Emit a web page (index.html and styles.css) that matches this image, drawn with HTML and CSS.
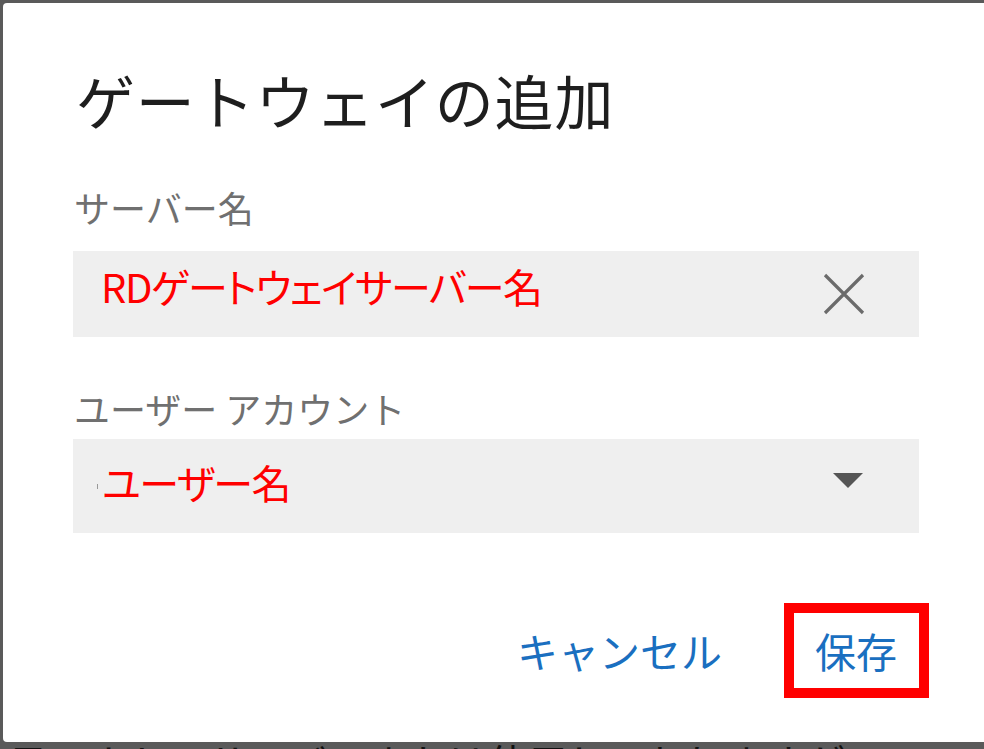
FILE: index.html
```html
<!DOCTYPE html>
<html lang="ja">
<head>
  <meta charset="UTF-8">
  <title>ゲートウェイの追加</title>
  <link rel="stylesheet" href="styles.css">
</head>
<body>
  <div class="dialog">
    <h1 class="title">ゲートウェイの追加</h1>

    <label class="field-label">サーバー名</label>
    <div class="field">
      <span class="field-text">RDゲートウェイサーバー名</span>
      <svg class="clear-icon" width="42" height="42" viewBox="0 0 42 42">
        <path d="M2 2 L40 40 M40 2 L2 40" stroke="#6b6b6b" stroke-width="3.2" fill="none"/>
      </svg>
    </div>

    <label class="field-label second">ユーザー アカウント</label>
    <div class="field select">
      <span class="caret-mark"></span>
      <span class="field-text">ユーザー名</span>
      <svg class="drop-icon" width="30" height="16" viewBox="0 0 30 16">
        <path d="M0 0 L30 0 L15 15 Z" fill="#555"/>
      </svg>
    </div>

    <div class="actions">
      <button class="btn">キャンセル</button>
      <button class="btn save">保存</button>
    </div>
  </div>
  <p class="behind">日　ホセンサーバーまたは使用しておりますが</p>
</body>
</html>
```

FILE: styles.css
```css
body {
  margin: 0;
  background-color: #5a5a5a;
  font-family: "Noto Sans CJK JP", "Noto Sans", sans-serif;
  overflow: hidden;
  height: 749px;
}

.dialog {
  margin: 3px 0 0 3px;
  width: 846px;
  height: 677px;
  padding: 62px 65px 0 70px;
  background-color: #fff;
  border-radius: 4px 0 0 4px;
}

.title {
  margin: 0 0 0 3px;
  font-size: 59px;
  font-weight: normal;
  letter-spacing: 0.8px;
  line-height: 1.2;
  color: #1e1e1e;
}

.field-label {
  display: block;
  margin: 50px 0 0 1px;
  font-size: 36px;
  line-height: 1.2;
  color: #707070;
}

.field-label.second {
  margin-top: 50px;
}

.field {
  display: flex;
  align-items: center;
  margin-top: 22px;
  height: 86px;
  padding: 0 54px 0 28px;
  background-color: #efefef;
}

.field.select {
  height: 94px;
  margin-top: 9px;
  padding-right: 56px;
}

.field-text {
  flex: 1;
  margin-bottom: 16px;
  font-size: 40px;
  font-feature-settings: "palt";
  letter-spacing: -1.5px;
  line-height: 1;
  color: #ff0000;
}

.select .field-text {
  margin-bottom: 8px;
}

.drop-icon {
  margin-bottom: 11px;
}

.caret-mark {
  width: 1px;
  height: 5px;
  margin: 0 4px 0 -4px;
  background-color: #999;
}

.actions {
  display: flex;
  justify-content: flex-end;
  align-items: center;
  gap: 62px;
  margin-top: 70px;
}

.btn {
  background: none;
  border: none;
  padding: 0;
  font-family: inherit;
  font-size: 41px;
  line-height: 1;
  color: #1a6fc0;
  cursor: pointer;
}

.btn.save {
  border: 10px solid #ff0000;
  padding: 17px 22px 17px 21px;
  margin-right: -10px;
}

.behind {
  margin: 0 0 0 8px;
  font-size: 40px;
  line-height: 1;
  color: #111;
  white-space: nowrap;
}
```
